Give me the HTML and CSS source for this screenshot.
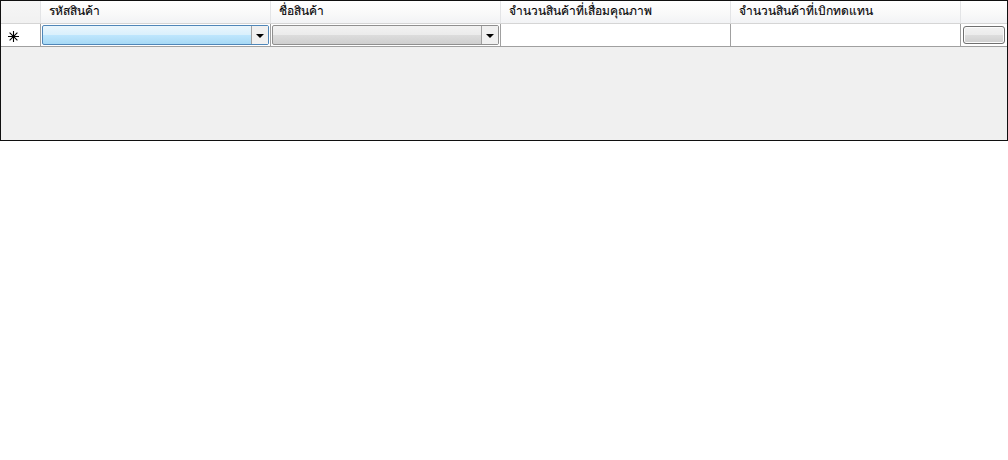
FILE: index.html
```html
<!DOCTYPE html>
<html lang="th">
<head>
<meta charset="UTF-8">
<title>รายการสินค้า</title>
<link rel="stylesheet" href="styles.css">
</head>
<body>
<div class="grid">
  <div class="row header">
    <div class="cell rowhead"></div>
    <div class="cell">รหัสสินค้า</div>
    <div class="cell">ชื่อสินค้า</div>
    <div class="cell">จำนวนสินค้าที่เสื่อมคุณภาพ</div>
    <div class="cell">จำนวนสินค้าที่เบิกทดแทน</div>
    <div class="cell last"></div>
  </div>
  <div class="row data">
    <div class="cell rowhead">
      <svg class="star" width="11" height="11" viewBox="0 0 11 11">
        <path d="M5.5 0V11M0 5.5H11M1.6 1.6L9.4 9.4M9.4 1.6L1.6 9.4" stroke="#000" stroke-width="1.1"/>
      </svg>
    </div>
    <div class="cell">
      <div class="combo focused"><span class="combo-text"></span><span class="drop"><span class="arrow"></span></span></div>
    </div>
    <div class="cell">
      <div class="combo"><span class="combo-text"></span><span class="drop"><span class="arrow"></span></span></div>
    </div>
    <div class="cell"></div>
    <div class="cell"></div>
    <div class="cell last"><div class="btn"></div></div>
  </div>
  <div class="empty"></div>
</div>
</body>
</html>
```
FILE: styles.css
```css
body {
  margin: 0;
  background-color: #fff;
  font-family: Tahoma, "DejaVu Sans", "Noto Sans", sans-serif;
  font-size: 12px;
  color: #000;
}
.grid {
  width: 1006px;
  height: 139px;
  border: 1px solid #101010;
  background-color: #f0f0f0;
  display: flex;
  flex-direction: column;
}
.row {
  display: grid;
  grid-template-columns: 40px 230px 230px 230px 230px 46px;
}
.header {
  height: 22px;
  background: linear-gradient(#ffffff, #fafafa 50%, #f2f3f5);
  border-bottom: 1px solid #d5d5d5;
}
.header .cell {
  border-right: 1px solid #e3e4e6;
  padding: 3px 0 0 8px;
  line-height: 15px;
  white-space: nowrap;
  overflow: hidden;
  -webkit-text-stroke: 0.1px #000;
}
.header .rowhead {
  padding: 0;
  background: linear-gradient(#f6f6f6, #f1f1f1);
}
.header .last {
  border-right: none;
}
.data {
  height: 22px;
  background-color: #fff;
  border-bottom: 1px solid #a0a0a0;
}
.data .cell {
  border-right: 1px solid #a0a0a0;
  box-sizing: border-box;
  display: flex;
  align-items: center;
}
.data .rowhead {
  background-color: #fff;
  border-right: 1px solid #a0a0a0;
  padding: 3px 0 0 7px;
}
.data .last {
  border-right: none;
  justify-content: center;
}
.star {
  display: block;
}
.combo {
  flex: 1;
  height: 20px;
  margin: 0 1px 0 1px;
  box-sizing: border-box;
  border: 1px solid #8f8f8f;
  border-radius: 2px;
  display: flex;
  background: linear-gradient(#f2f2f2, #ebebeb 50%, #dcdcdc 51%, #cfcfcf);
}
.combo.focused {
  border-color: #4f86b8;
  background: linear-gradient(#eaf6fd, #d9f0fc 50%, #bee6fd 51%, #a7d9f5);
}
.combo-text {
  flex: 1;
}
.drop {
  width: 16px;
  border-left: 1px solid #a0a0a0;
  background-color: #f0f0f0;
  display: flex;
  align-items: center;
  justify-content: center;
}
.arrow {
  width: 0;
  height: 0;
  border-left: 4px solid transparent;
  border-right: 4px solid transparent;
  border-top: 4px solid #000;
  margin-top: 1px;
}
.btn {
  width: 42px;
  height: 18px;
  box-sizing: border-box;
  border: 1px solid #707070;
  border-radius: 3px;
  box-shadow: inset 0 0 0 1px #fcfcfc;
  background: linear-gradient(#f2f2f2, #ebebeb 50%, #dddddd 51%, #cfcfcf);
}
.empty {
  flex: 1;
}
```
